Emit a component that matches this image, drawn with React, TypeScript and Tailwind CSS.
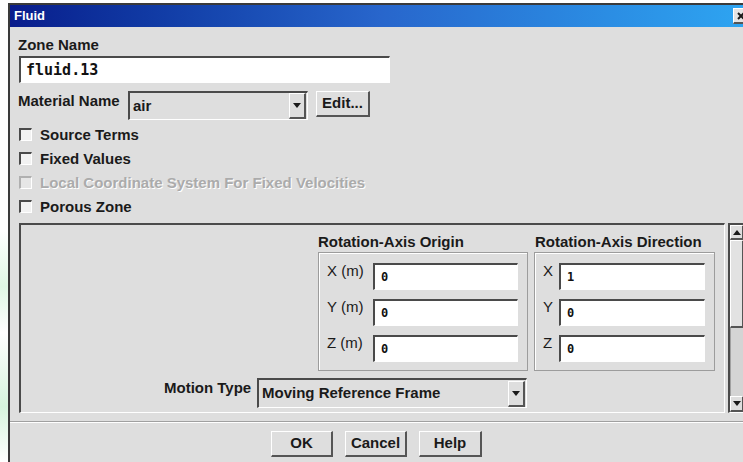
import React from "react"

// bevel styles for the motif-like widgets
const sunken =
  "border-t-2 border-l-2 border-b border-r border-t-[#4a4a4a] border-l-[#4a4a4a] border-b-white border-r-white"
const raised =
  "border-t border-l border-b-2 border-r-2 border-t-white border-l-white border-b-[#555555] border-r-[#555555]"

const sans = "font-['Liberation_Sans',Arial,sans-serif]"
const mono = "font-['DejaVu_Sans_Mono','Liberation_Mono',monospace]"

function DownArrow() {
  return (
    <svg width="8" height="5" viewBox="0 0 8 5">
      <path d="M0 0 L8 0 L4 5 Z" fill="#1a1a1a" />
    </svg>
  )
}

function UpArrow() {
  return (
    <svg width="8" height="5" viewBox="0 0 8 5">
      <path d="M0 5 L8 5 L4 0 Z" fill="#1a1a1a" />
    </svg>
  )
}

function Check({ text, disabled }: { text: string; disabled?: boolean }) {
  return (
    <div className="flex items-center h-[24px] ml-[1px]">
      <div
        className={`w-[13px] h-[13px] ${sunken} ${disabled ? "bg-[#e6e6e6] border-t-[#b0b0b0] border-l-[#b0b0b0]" : "bg-[#f2f2f2]"}`}
      />
      <span
        className={`ml-[8px] text-[15px] font-bold leading-[17px] ${
          disabled ? "text-[#ababab] [text-shadow:1px_1px_0_#ffffff]" : "text-[#1a1a1a]"
        }`}
      >
        {text}
      </span>
    </div>
  )
}

function Field({ label, value, labelW, inputW }: { label: string; value: string; labelW: string; inputW: string }) {
  return (
    <div className="flex items-start h-[27px]">
      <span className={`${labelW} text-[15px] leading-[17px] text-[#1a1a1a] -mt-[1px]`}>{label}</span>
      <div className={`${inputW} h-[27px] bg-white ${sunken} flex items-center pl-[6px]`}>
        <span className={`${mono} text-[12px] font-bold text-[#111]`}>{value}</span>
      </div>
    </div>
  )
}

function Button({ text, w }: { text: string; w: string }) {
  return (
    <div className={`${w} h-[26px] ${raised} bg-[#dedede] flex items-center justify-center`}>
      <span className="text-[15px] font-bold text-[#1a1a1a]">{text}</span>
    </div>
  )
}

export default function App() {
  const origin = [
    { label: "X (m)", value: "0" },
    { label: "Y (m)", value: "0" },
    { label: "Z (m)", value: "0" },
  ]
  const direction = [
    { label: "X", value: "1" },
    { label: "Y", value: "0" },
    { label: "Z", value: "0" },
  ]

  return (
    <div
      className={`${sans} w-[743px] h-[462px] overflow-hidden flex pt-[3px] pl-[8px] bg-[linear-gradient(180deg,#ffffff_0%,#ffffff_50%,#dff7e4_62%,#ffffff_72%,#d6f5dd_88%,#ffffff_100%)]`}
    >
      <div className="w-[745px] shrink-0 border-l-2 border-t-2 border-[#3a3a3a] bg-[#dedede] flex flex-col">
        {/* title bar */}
        <div className="h-[22px] flex items-center pl-[4px] bg-linear-to-r from-[#0a1c8c] via-[#2866cc] to-[#2ea6f2]">
          <span className="text-white text-[13px] font-bold">Fluid</span>
          <div className={`ml-auto mr-[4px] w-[16px] h-[16px] ${raised} bg-[#e4e4e4] flex items-center justify-center`}>
            <svg width="8" height="8" viewBox="0 0 8 8">
              <path d="M1 1 L7 7 M7 1 L1 7" stroke="#1a1a1a" strokeWidth="2" />
            </svg>
          </div>
        </div>

        <div className="flex flex-col pl-[8px]">
          <span className="mt-[9px] h-[17px] leading-[17px] text-[15px] font-bold text-[#1a1a1a]">Zone Name</span>
          <div className={`mt-[3px] ml-[1px] w-[371px] h-[27px] bg-white ${sunken} flex items-center pl-[5px]`}>
            <span className={`${mono} text-[15px] font-bold text-[#111]`}>fluid.13</span>
          </div>

          <div className="mt-[8px] flex items-start">
            <span className="w-[110px] mt-[1px] leading-[17px] text-[15px] font-bold text-[#1a1a1a]">Material Name</span>
            <div className={`w-[180px] h-[29px] ${sunken} flex items-center`}>
              <span className="pl-[3px] text-[15px] font-bold text-[#1a1a1a]">air</span>
              <div className={`ml-auto mr-[1px] w-[17px] h-[26px] ${raised} flex items-center justify-center`}>
                <DownArrow />
              </div>
            </div>
            <div className="ml-[8px]">
              <Button text="Edit..." w="w-[54px]" />
            </div>
          </div>

          <div className="mt-[2px] flex flex-col">
            <Check text="Source Terms" />
            <Check text="Fixed Values" />
            <Check text="Local Coordinate System For Fixed Velocities" disabled />
            <Check text="Porous Zone" />
          </div>

          <div className="mt-[5px] ml-[1px] flex">
            {/* scrolled panel */}
            <div className={`w-[706px] h-[190px] ${sunken} flex flex-col`}>
              <div className="flex pl-[297px]">
                <div className="w-[210px] flex flex-col">
                  <span className="mt-[8px] h-[17px] leading-[17px] text-[15px] font-bold text-[#1a1a1a]">
                    Rotation-Axis Origin
                  </span>
                  <div className="mt-[2px] h-[119px] border border-[#9c9c9c] shadow-[inset_1px_1px_0_#ffffff] flex flex-col gap-[9px] pt-[10px] pl-[8px]">
                    {origin.map((f, i) => (
                      <Field key={i} label={f.label} value={f.value} labelW="w-[46px]" inputW="w-[145px]" />
                    ))}
                  </div>
                </div>
                <div className="ml-[6px] w-[181px] flex flex-col">
                  <span className="mt-[8px] pl-[1px] h-[17px] leading-[17px] text-[15px] font-bold text-[#1a1a1a]">
                    Rotation-Axis Direction
                  </span>
                  <div className="mt-[2px] h-[119px] border border-[#9c9c9c] shadow-[inset_1px_1px_0_#ffffff] flex flex-col gap-[9px] pt-[10px] pl-[8px]">
                    {direction.map((f, i) => (
                      <Field key={i} label={f.label} value={f.value} labelW="w-[16px]" inputW="w-[146px]" />
                    ))}
                  </div>
                </div>
              </div>

              <div className="mt-[7px] pl-[143px] flex items-start">
                <span className="w-[93px] mt-[1px] leading-[17px] text-[15px] font-bold text-[#1a1a1a]">Motion Type</span>
                <div className={`w-[270px] h-[30px] ${sunken} flex items-center`}>
                  <span className="pl-[3px] text-[15px] font-bold text-[#1a1a1a]">Moving Reference Frame</span>
                  <div className={`ml-auto mr-[1px] w-[17px] h-[26px] ${raised} flex items-center justify-center`}>
                    <DownArrow />
                  </div>
                </div>
              </div>
            </div>

            {/* vertical scrollbar */}
            <div className={`ml-[3px] w-[17px] h-[190px] ${sunken} bg-[#d4d4d4] flex flex-col`}>
              <div className={`h-[15px] ${raised} bg-[#dedede] flex items-center justify-center`}>
                <UpArrow />
              </div>
              <div className={`h-[88px] ${raised} bg-[#e2e2e2]`} />
              <div className="flex-1 border-l border-[#a0a0a0]" />
              <div className={`h-[16px] ${raised} bg-[#dedede] flex items-center justify-center`}>
                <DownArrow />
              </div>
            </div>
          </div>
        </div>

        <div className="mt-[8px] border-t border-b border-t-[#a0a0a0] border-b-white" />

        <div className="mt-[8px] flex justify-center gap-[12px] pr-[10px]">
          <Button text="OK" w="w-[62px]" />
          <Button text="Cancel" w="w-[62px]" />
          <Button text="Help" w="w-[63px]" />
        </div>
      </div>
    </div>
  )
}
